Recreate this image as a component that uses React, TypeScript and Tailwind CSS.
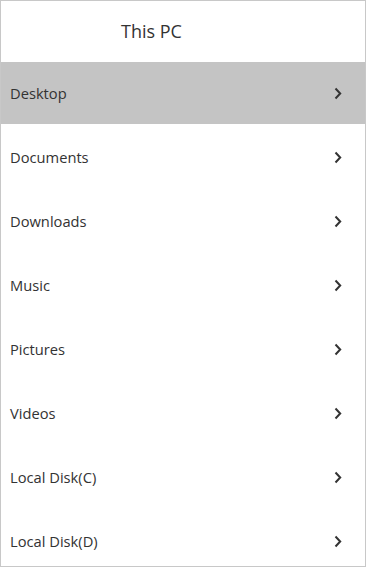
const folders = [
  "Desktop",
  "Documents",
  "Downloads",
  "Music",
  "Pictures",
  "Videos",
  "Local Disk(C)",
  "Local Disk(D)",
];

const Chevron = () => (
  <svg width="8" height="13" viewBox="0 0 8 13" fill="none" className="text-[#333333]">
    <path d="M1.5 1.5L6.2 6.5L1.5 11.5" stroke="currentColor" strokeWidth="2" />
  </svg>
);

export default function App() {
  const selected = "Desktop";

  return (
    <div
      className="h-[567px] w-[366px] overflow-hidden border border-[#c8c8c8] bg-white text-[#333333]"
      style={{ fontFamily: '"Open Sans", "Noto Sans", sans-serif' }}
    >
      <header className="flex h-[60px] items-center pl-[120px] text-[18px]">This PC</header>
      <ul>
        {folders.map((name) => (
          <li key={name} className="h-16 py-px">
            <div
              className={
                "flex h-full items-center justify-between pl-[9px] pr-[23px] text-[14.7px] " +
                (name === selected ? "bg-[#c4c4c4]" : "bg-white")
              }
            >
              <span>{name}</span>
              <Chevron />
            </div>
          </li>
        ))}
      </ul>
    </div>
  );
}
